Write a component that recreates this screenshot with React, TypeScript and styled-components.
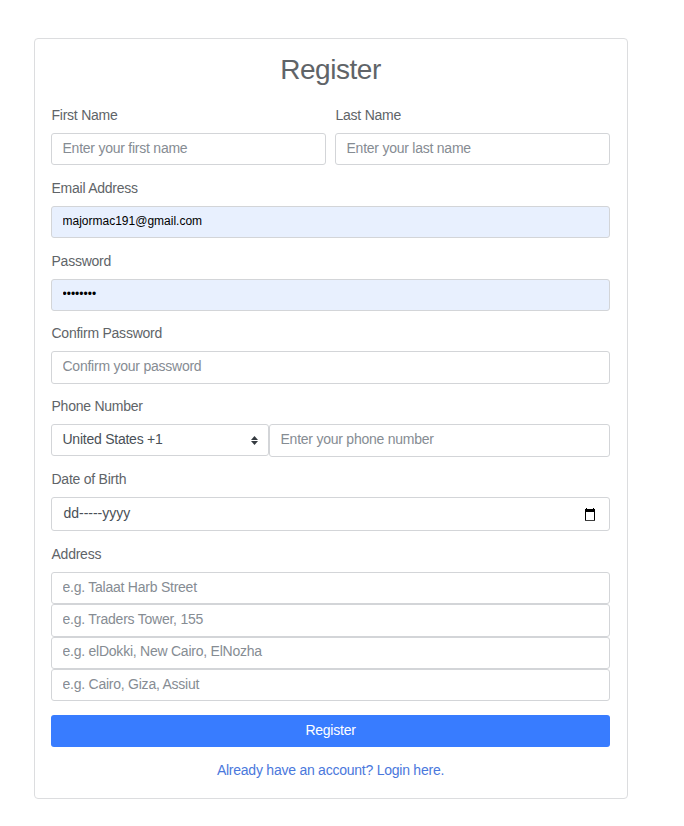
import React from "react";
import styled, { createGlobalStyle } from "styled-components";

const GlobalStyle = createGlobalStyle`
  *, *::before, *::after { box-sizing: border-box; }
  body {
    margin: 0;
    background: #fff;
    font-family: "Liberation Sans", Arial, sans-serif;
    font-size: 14px;
    letter-spacing: -0.24px;
    color: #606468;
  }
`;

const Page = styled.main`
  padding: 38px 56px 27px 34px;
`;

const Card = styled.form`
  height: 761px;
  padding: 0 17px 0 16px;
  border: 1px solid #dcdddf;
  border-radius: 4px;
`;

const Title = styled.h1`
  margin: 0;
  height: 66px;
  padding-top: 14px;
  font-size: 28px;
  line-height: 34px;
  font-weight: 400;
  letter-spacing: -0.45px;
  text-align: center;
`;

const NameRow = styled.div`
  display: grid;
  grid-template-columns: 1fr 1fr;
  gap: 9px;
`;

const Group = styled.div<{ $gap?: number }>`
  margin-bottom: ${({ $gap = 13 }) => $gap}px;
`;

const Label = styled.label`
  display: block;
  height: 28px;
  padding-left: 0.5px;
  line-height: 20px;
`;

const Input = styled.input<{ $height?: number; $bottom?: number; $filled?: boolean }>`
  display: block;
  width: 100%;
  height: ${({ $height = 32 }) => $height}px;
  padding: 0 10.5px ${({ $bottom = 2 }) => $bottom}px;
  border: 1px solid #d3d5d8;
  border-radius: 3px;
  outline: none;
  background: ${({ $filled }) => ($filled ? "#e8f0fe" : "#fff")};
  color: ${({ $filled }) => ($filled ? "#000" : "#495057")};
  font-family: inherit;
  font-size: ${({ $filled }) => ($filled ? "12px" : "14px")};
  letter-spacing: ${({ $filled }) => ($filled ? "0" : "inherit")};
  &::placeholder {
    color: #868c93;
    opacity: 1;
  }
`;

const PhoneRow = styled.div`
  display: flex;
  align-items: flex-start;
`;

const Picker = styled.button<{ $width: string; $height: number }>`
  display: flex;
  flex: none;
  align-items: center;
  justify-content: space-between;
  width: ${({ $width }) => $width};
  height: ${({ $height }) => $height}px;
  padding: 0 10px 3px 10.5px;
  border: 1px solid #d3d5d8;
  border-radius: 3px;
  background: #fff;
  color: #495057;
  font: inherit;
  letter-spacing: inherit;
`;

const DateText = styled.span`
  padding-left: 1px;
  letter-spacing: -0.02px;
`;

const CalendarIcon = styled.svg`
  margin: 4px 3px 0 0;
`;

const SortIcon = styled.svg`
  margin-top: 3px;
`;

const Submit = styled.button`
  display: block;
  width: 100%;
  height: 32px;
  padding: 0 0 2px;
  border: 0;
  border-radius: 3px;
  background: #387cff;
  color: #fff;
  font: inherit;
  letter-spacing: inherit;
`;

const LoginLink = styled.a`
  display: block;
  margin-top: 13px;
  line-height: 20px;
  text-align: center;
  color: #4a78dc;
  text-decoration: none;
`;

const addressLines = [
  { hint: "e.g. Talaat Harb Street", height: 32, bottom: 2 },
  { hint: "e.g. Traders Tower, 155", height: 33, bottom: 4 },
  { hint: "e.g. elDokki, New Cairo, ElNozha", height: 32, bottom: 4 },
  { hint: "e.g. Cairo, Giza, Assiut", height: 32, bottom: 2 },
];

export default function App() {
  return (
    <Page>
      <GlobalStyle />
      <Card>
        <Title>Register</Title>
        <NameRow>
          <Group>
            <Label htmlFor="first">First Name</Label>
            <Input id="first" placeholder="Enter your first name" />
          </Group>
          <Group>
            <Label htmlFor="last">Last Name</Label>
            <Input id="last" placeholder="Enter your last name" />
          </Group>
        </NameRow>
        <Group>
          <Label htmlFor="email">Email Address</Label>
          <Input id="email" $filled defaultValue="majormac191@gmail.com" />
        </Group>
        <Group $gap={12}>
          <Label htmlFor="password">Password</Label>
          <Input id="password" type="password" $filled defaultValue="password" />
        </Group>
        <Group $gap={12}>
          <Label htmlFor="confirm">Confirm Password</Label>
          <Input
            id="confirm"
            type="password"
            $height={33}
            $bottom={4}
            placeholder="Confirm your password"
          />
        </Group>
        <Group $gap={12}>
          <Label htmlFor="phone">Phone Number</Label>
          <PhoneRow>
            <Picker type="button" $width="218px" $height={32}>
              United States +1
              <SortIcon width="7" height="9" viewBox="0 0 7 9" fill="#343a40">
                <path d="M3.5 0 7 4H0zM0 5h7L3.5 9z" />
              </SortIcon>
            </Picker>
            <Input
              id="phone"
              $height={33}
              $bottom={4}
              placeholder="Enter your phone number"
            />
          </PhoneRow>
        </Group>
        <Group>
          <Label>Date of Birth</Label>
          <Picker type="button" $width="100%" $height={34}>
            <DateText>dd-----yyyy</DateText>
            <CalendarIcon width="12" height="13" viewBox="0 0 12 13">
              <path
                fill="#000"
                fillRule="evenodd"
                d="M2 0h1v1h6V0h1v1h1v11.8H1V1h1zM2 4v8h8V4z"
              />
            </CalendarIcon>
          </Picker>
        </Group>
        <Group $gap={14}>
          <Label>Address</Label>
          {addressLines.map(({ hint, height, bottom }) => (
            <Input key={hint} $height={height} $bottom={bottom} placeholder={hint} />
          ))}
        </Group>
        <Submit type="button">Register</Submit>
        <LoginLink href="#">Already have an account? Login here.</LoginLink>
      </Card>
    </Page>
  );
}
